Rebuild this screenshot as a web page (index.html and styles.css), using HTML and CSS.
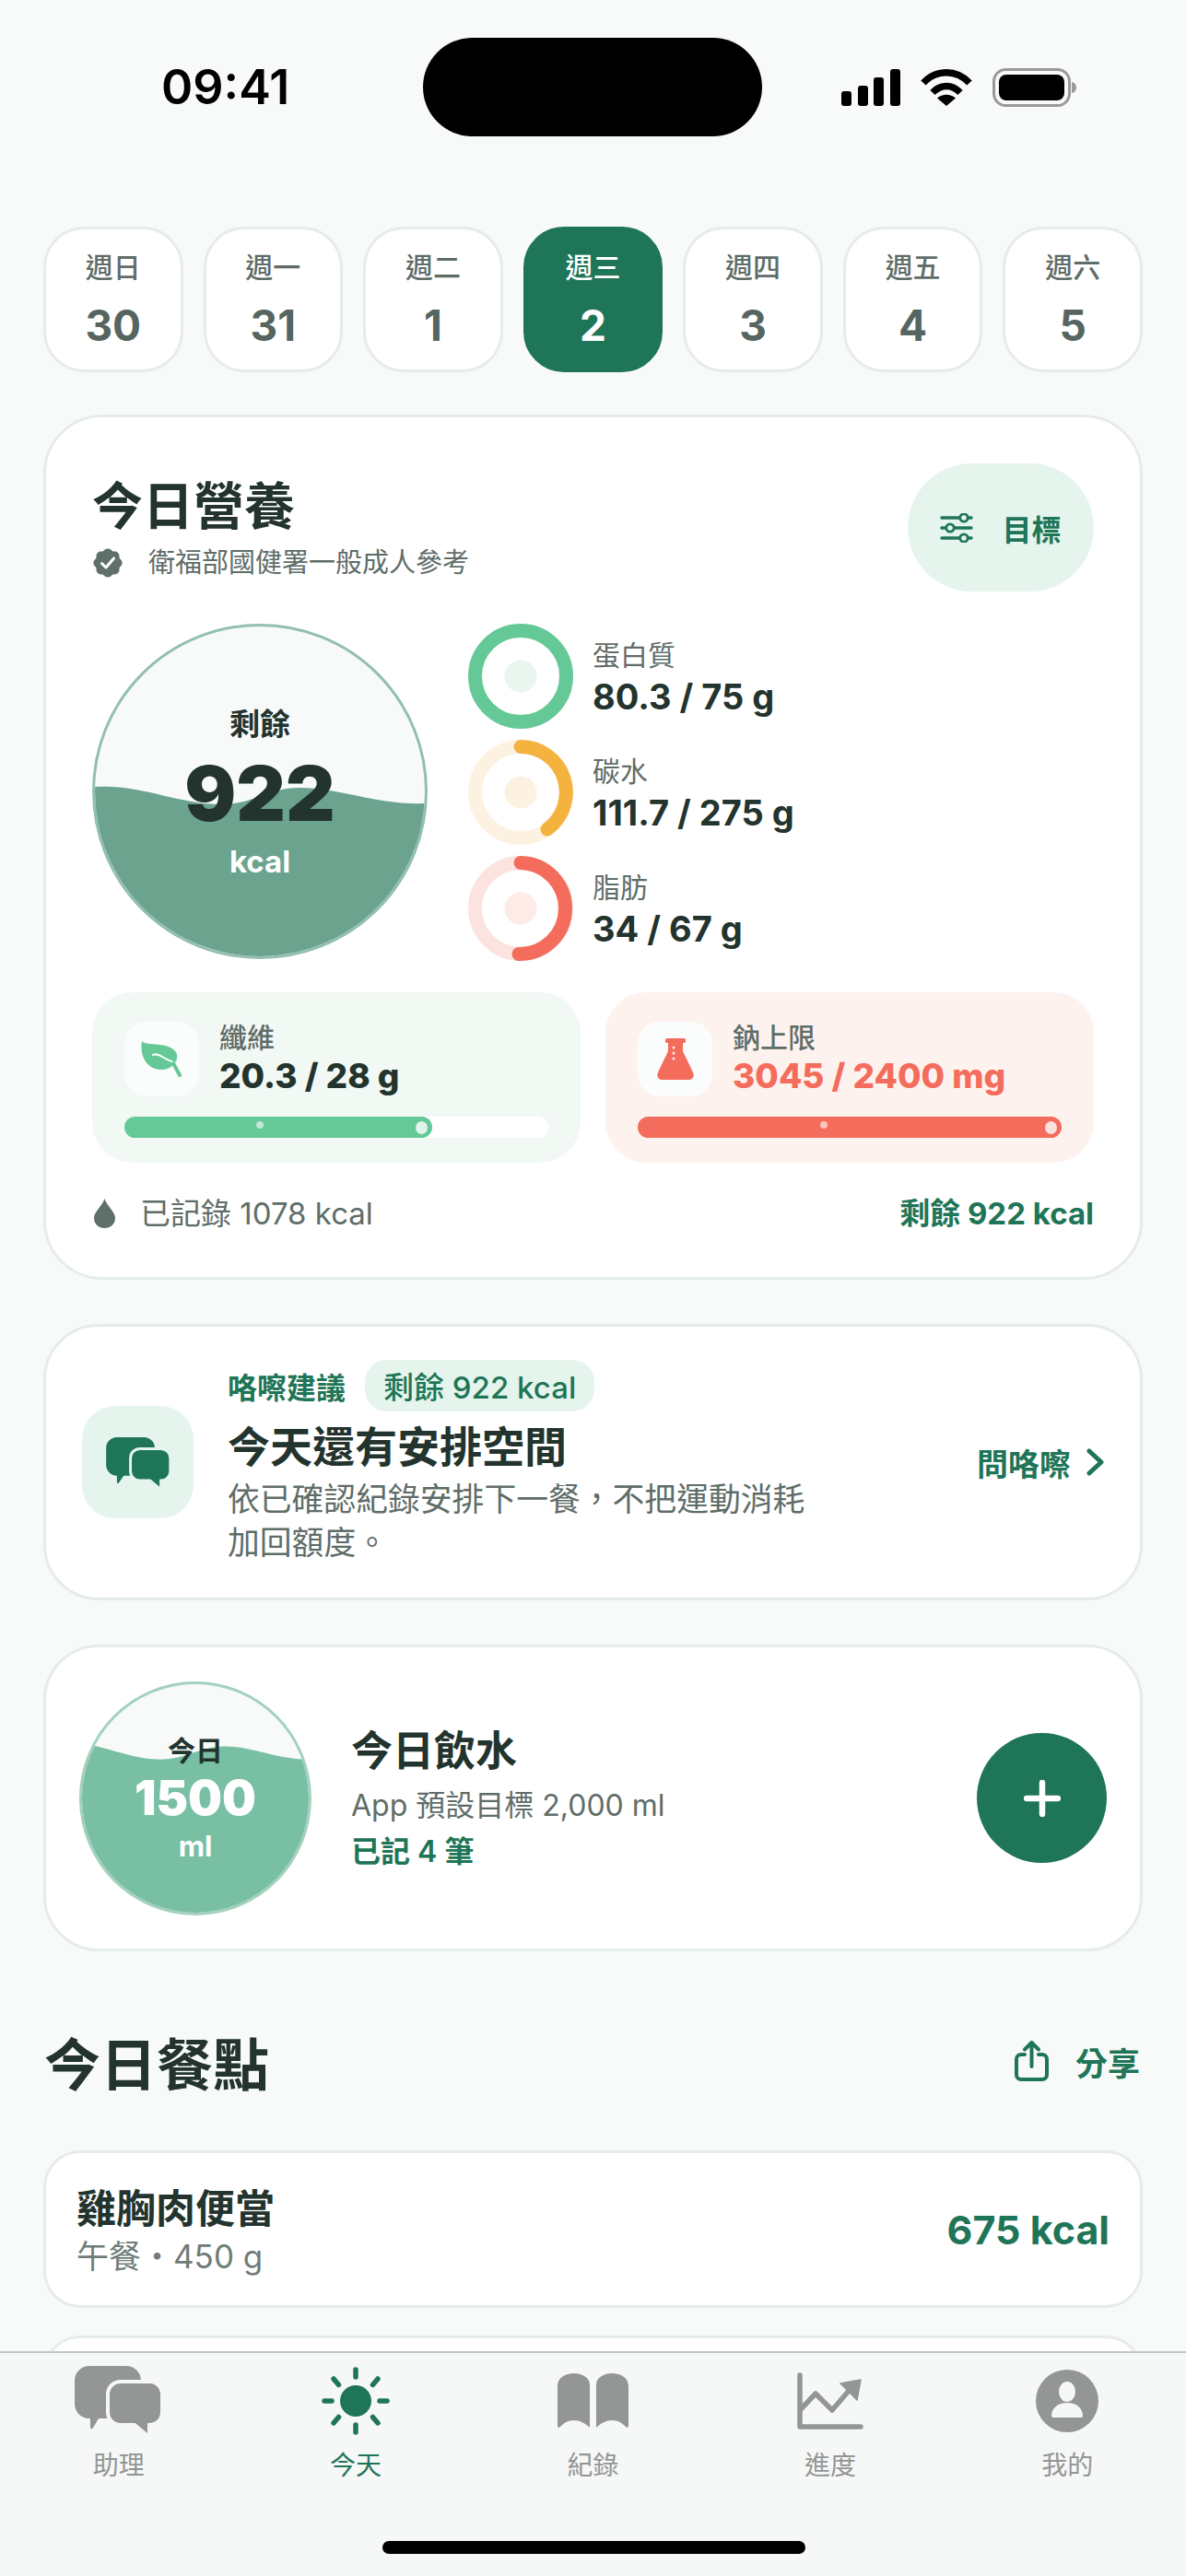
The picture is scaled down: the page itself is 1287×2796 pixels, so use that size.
FILE: index.html
```html
<!DOCTYPE html>
<html lang="zh-Hant">
	<head>
		<meta charset="utf-8" />
		<title>今日營養</title>
		<link rel="stylesheet" href="styles.css">
	</head>
	<body>
		<div class="phone">
			<!--狀態列-->
			<div class="status">
				<span class="time">09:41</span>
				<div class="island"></div>
				<div class="status-icons">
					<svg width="64" height="40" viewBox="0 0 64 40">
						<rect x="0" y="24" width="11" height="16" rx="3"/>
						<rect x="18" y="18" width="11" height="22" rx="3"/>
						<rect x="35" y="9" width="11" height="31" rx="3"/>
						<rect x="53" y="0" width="11" height="40" rx="3"/>
					</svg>
					<svg width="56" height="41" viewBox="0 0 56 41">
						<path d="M3 16C17 1 39 1 53 16" fill="none" stroke="#000" stroke-width="7.5"/>
						<path d="M13 26.5C22 17 34 17 43 26.5" fill="none" stroke="#000" stroke-width="7.5"/>
						<path d="M28 41L18 32.5C24 27.5 32 27.5 38 32.5Z"/>
					</svg>
					<svg width="91" height="42" viewBox="0 0 91 42">
						<rect x="1.5" y="1.5" width="82" height="39" rx="13" fill="none" stroke="#999" stroke-width="3"/>
						<rect x="7" y="7" width="71" height="28" rx="8"/>
						<path d="M86 15C89 15.500 91 18 91 21C91 24 89 26.500 86 27Z" fill="#999"/>
					</svg>
				</div>
			</div>

			<!--日期列-->
			<div class="days">
				<div class="day"><span class="day-name">週日</span><span class="day-num">30</span></div>
				<div class="day"><span class="day-name">週一</span><span class="day-num">31</span></div>
				<div class="day"><span class="day-name">週二</span><span class="day-num">1</span></div>
				<div class="day active"><span class="day-name">週三</span><span class="day-num">2</span></div>
				<div class="day"><span class="day-name">週四</span><span class="day-num">3</span></div>
				<div class="day"><span class="day-name">週五</span><span class="day-num">4</span></div>
				<div class="day"><span class="day-name">週六</span><span class="day-num">5</span></div>
			</div>

			<!--今日營養-->
			<div class="card nutrition">
				<div class="nutrition-head">
					<div class="head-text">
						<div class="big-title">今日營養</div>
						<div class="source">
							<svg width="34" height="34" viewBox="0 0 34 34">
								<g fill="#5f6f6a">
									<rect x="4.500" y="4.500" width="25" height="25" rx="5"/>
									<rect x="4.500" y="4.500" width="25" height="25" rx="5" transform="rotate(45 17 17)"/>
								</g>
								<path d="M10.500 17.500L15 22L23.500 12" fill="none" stroke="#fff" stroke-width="3" stroke-linecap="round" stroke-linejoin="round"/>
							</svg>
							<span>衛福部國健署一般成人參考</span>
						</div>
					</div>
					<div class="goal-btn">
						<svg width="36" height="32" viewBox="0 0 36 32" fill="none" stroke="#1f7557" stroke-width="3.500" stroke-linecap="round">
							<path d="M2 5H21M31 5H34M2 16H6M16 16H34M2 27H21M31 27H34"/>
							<circle cx="26" cy="5" r="4.200" stroke-width="2.800"/>
							<circle cx="11" cy="16" r="4.200" stroke-width="2.800"/>
							<circle cx="26" cy="27" r="4.200" stroke-width="2.800"/>
						</svg>
						<span>目標</span>
					</div>
				</div>

				<div class="nutrition-body">
					<div class="gauge">
						<svg class="wave" viewBox="0 0 358 358" preserveAspectRatio="none">
							<path d="M0 174C50 171 90 193 138 193C172 193 188 175 222 175C266 175 306 194 358 192V358H0Z" fill="#6ba38f"/>
						</svg>
						<span class="gauge-label">剩餘</span>
						<span class="gauge-num">922</span>
						<span class="gauge-unit">kcal</span>
					</div>
					<div class="macros">
						<div class="macro">
							<svg class="ring" viewBox="0 0 114 114">
								<circle cx="57" cy="57" r="49.500" fill="none" stroke="#65c997" stroke-width="15"/>
								<circle cx="57" cy="57" r="17.500" fill="#e8f6ef"/>
							</svg>
							<div>
								<div class="macro-name">蛋白質</div>
								<div class="macro-val">80.3 / 75 g</div>
							</div>
						</div>
						<div class="macro">
							<svg class="ring" viewBox="0 0 114 114">
								<circle cx="57" cy="57" r="49.500" fill="none" stroke="#fdf2e2" stroke-width="15"/>
								<path d="M57 7.500A49.500 49.500 0 0 1 86 97" fill="none" stroke="#f4b23e" stroke-width="15" stroke-linecap="round"/>
								<circle cx="57" cy="57" r="17.500" fill="#fdf2e2"/>
							</svg>
							<div>
								<div class="macro-name">碳水</div>
								<div class="macro-val">111.7 / 275 g</div>
							</div>
						</div>
						<div class="macro">
							<svg class="ring" viewBox="0 0 114 114">
								<circle cx="57" cy="57" r="49.500" fill="none" stroke="#fce3e0" stroke-width="15"/>
								<path d="M57 7.500A49.500 49.500 0 0 1 55 106.500" fill="none" stroke="#f46c5b" stroke-width="15" stroke-linecap="round"/>
								<circle cx="57" cy="57" r="17.500" fill="#fdebe8"/>
							</svg>
							<div>
								<div class="macro-name">脂肪</div>
								<div class="macro-val">34 / 67 g</div>
							</div>
						</div>
					</div>
				</div>

				<div class="limits">
					<div class="limit fiber">
						<div class="limit-top">
							<div class="limit-icon">
								<svg width="45" height="39" viewBox="0 0 45 39">
									<path d="M1 0C5 6 30 0 38 12C42 19 36 30 24 31C8 32 -2 18 1 0Z" fill="#65c997"/>
									<path d="M13 15C19 12 25 20 36 23" fill="none" stroke="#fbfdfc" stroke-width="2" stroke-linecap="round"/>
									<path d="M35 24L42 37" fill="none" stroke="#65c997" stroke-width="4" stroke-linecap="round"/>
								</svg>
							</div>
							<div>
								<div class="limit-name">纖維</div>
								<div class="limit-val">20.3 / 28 g</div>
							</div>
						</div>
						<div class="track">
							<div class="track-fill" style="width:72.500%">
								<i class="dot-small"></i>
								<i class="dot-end"></i>
							</div>
						</div>
					</div>
					<div class="limit sodium">
						<div class="limit-top">
							<div class="limit-icon">
								<svg width="40" height="45" viewBox="0 0 40 45">
									<rect x="9" y="0" width="22" height="5" rx="1.500" fill="#f46c5b"/>
									<path d="M12 4H28V14L39 37C41 42 38 45 34 45H6C2 45 -1 42 1 37L12 14Z" fill="#f46c5b"/>
									<g fill="#fef2ef">
										<circle cx="18" cy="10" r="1.500"/>
										<circle cx="18" cy="16" r="1.500"/>
										<circle cx="18" cy="22" r="1.500"/>
									</g>
								</svg>
							</div>
							<div>
								<div class="limit-name">鈉上限</div>
								<div class="limit-val over">3045 / 2400 mg</div>
							</div>
						</div>
						<div class="track">
							<div class="track-fill" style="width:100%">
								<i class="dot-small"></i>
								<i class="dot-end"></i>
							</div>
						</div>
					</div>
				</div>

				<div class="nutrition-foot">
					<div class="logged">
						<svg width="23" height="32" viewBox="0 0 23 32">
							<path d="M11.500 0C14 8 23 14 23 21C23 27.500 18 32 11.500 32C5 32 0 27.500 0 21C0 14 9 8 11.500 0Z" fill="#5f6f6a"/>
						</svg>
						<span>已記錄 1078 kcal</span>
					</div>
					<span class="left-kcal">剩餘 922 kcal</span>
				</div>
			</div>

			<!--咯嚓建議-->
			<div class="card coach">
				<div class="coach-icon">
					<svg width="70" height="55" viewBox="0 0 95 75">
						<path d="M16 0H56C65 0 72 7 72 16V41C72 50 65 57 56 57H26L19 67C18 69 16 68 16 66V57C7 57 0 50 0 41V16C0 7 7 0 16 0Z" fill="#1f7557"/>
						<path d="M50 17H81C89 17 95 23 95 31V50C95 58 89 64 81 64V73C81 75 79 76 77 74L65 64H50C42 64 36 58 36 50V31C36 23 42 17 50 17Z" fill="#1f7557" stroke="#e5f5ed" stroke-width="4"/>
					</svg>
				</div>
				<div class="coach-text">
					<div class="coach-top">
						<span class="coach-label">咯嚓建議</span>
						<span class="coach-pill">剩餘 922 kcal</span>
					</div>
					<div class="coach-title">今天還有安排空間</div>
					<div class="coach-desc">依已確認紀錄安排下一餐，不把運動消耗加回額度。</div>
				</div>
				<div class="coach-ask">
					<span>問咯嚓</span>
					<svg width="21" height="30" viewBox="0 0 21 30">
						<path d="M4 3L17 15L4 27" fill="none" stroke="#1f7557" stroke-width="5" stroke-linecap="round" stroke-linejoin="round"/>
					</svg>
				</div>
			</div>

			<!--今日飲水-->
			<div class="card water">
				<div class="water-gauge">
					<svg class="wave" viewBox="0 0 246 246" preserveAspectRatio="none">
						<path d="M0 64C30 68 55 81 85 81C113 81 128 67 155 67C186 67 210 81 246 81V246H0Z" fill="#79bfa3"/>
					</svg>
					<span class="water-label">今日</span>
					<span class="water-num">1500</span>
					<span class="water-unit">ml</span>
				</div>
				<div class="water-text">
					<div class="water-title">今日飲水</div>
					<div class="water-desc">App 預設目標 2,000 ml</div>
					<div class="water-count">已記 4 筆</div>
				</div>
				<div class="plus-btn">
					<svg width="40" height="40" viewBox="0 0 40 40">
						<path d="M20 3V37M3 20H37" stroke="#fff" stroke-width="6.500" stroke-linecap="round"/>
					</svg>
				</div>
			</div>

			<!--今日餐點-->
			<div class="section-head">
				<span class="section-title">今日餐點</span>
				<div class="share">
					<svg width="37" height="44" viewBox="0 0 37 44" fill="none" stroke="#1f7557" stroke-width="4" stroke-linecap="round" stroke-linejoin="round">
						<path d="M11 15H7A5 5 0 0 0 2 20V37A5 5 0 0 0 7 42H30A5 5 0 0 0 35 37V20A5 5 0 0 0 30 15H26"/>
						<path d="M18.500 28V3M11 9.500L18.500 2L26 9.500"/>
					</svg>
					<span>分享</span>
				</div>
			</div>
			<div class="meals">
				<div class="meal">
					<div>
						<div class="meal-name">雞胸肉便當</div>
						<div class="meal-sub">午餐・450 g</div>
					</div>
					<span class="meal-kcal">675 kcal</span>
				</div>
				<div class="meal"></div>
			</div>

			<!--底部分頁-->
			<div class="tabbar">
				<div class="tabs">
					<div class="tab">
						<div class="tab-icon">
							<svg width="95" height="75" viewBox="0 0 95 75">
								<path d="M16 0H56C65 0 72 7 72 16V41C72 50 65 57 56 57H26L20 67C19 69 17 69 17 66V57H16C7 57 0 50 0 41V16C0 7 7 0 16 0Z" fill="#949695"/>
								<path d="M50 17H81C89 17 95 23 95 31V50C95 58 89 64 81 64V73C81 75 79 76 77 74L65 64H50C42 64 36 58 36 50V31C36 23 42 17 50 17Z" fill="#949695" stroke="#f6f7f7" stroke-width="4"/>
							</svg>
						</div>
						<span>助理</span>
					</div>
					<div class="tab current">
						<div class="tab-icon">
							<svg width="74" height="74" viewBox="0 0 74 74">
								<circle cx="37" cy="37" r="17" fill="#1f7557"/>
								<g stroke="#1f7557" stroke-width="5.500" stroke-linecap="round">
									<path d="M37 3V11M37 63V71M3 37H11M63 37H71M13 13L18.500 19.500M55.500 54.500L61 61M61 13L55.500 19.500M18.500 54.500L13 61"/>
								</g>
							</svg>
						</div>
						<span>今天</span>
					</div>
					<div class="tab">
						<div class="tab-icon">
							<svg width="77" height="60" viewBox="0 0 77 60" fill="#949695">
								<path d="M0 14C0 5 8 0 18 0C28 0 35 6 35 12V59C30 54 24 51 18 51C11 51 7 54 3 58C1 60 0 59 0 56Z"/>
								<path d="M77 14C77 5 69 0 59 0C49 0 42 6 42 12V59C47 54 53 51 59 51C66 51 70 54 74 58C76 60 77 59 77 56Z"/>
							</svg>
						</div>
						<span>紀錄</span>
					</div>
					<div class="tab">
						<div class="tab-icon">
							<svg width="72" height="62" viewBox="0 0 72 62">
								<path d="M3 3V59H69" fill="none" stroke="#949695" stroke-width="5.500" stroke-linecap="round" stroke-linejoin="round"/>
								<path d="M3 41L20 23L38 41L56 20" fill="none" stroke="#949695" stroke-width="5.500" stroke-linejoin="round"/>
								<path d="M47 12L69 8L65 30Z" fill="#949695" stroke="#949695" stroke-width="1.500" stroke-linejoin="round"/>
							</svg>
						</div>
						<span>進度</span>
					</div>
					<div class="tab">
						<div class="tab-icon">
							<svg width="68" height="68" viewBox="0 0 68 68">
								<circle cx="34" cy="34" r="34" fill="#949695"/>
								<ellipse cx="34" cy="24" rx="9" ry="11" fill="#f6f7f7"/>
								<path d="M17 50C17 42 24 36 34 36C44 36 51 42 51 50C51 51.500 50 52 49 52H19C18 52 17 51.500 17 50Z" fill="#f6f7f7"/>
							</svg>
						</div>
						<span>我的</span>
					</div>
				</div>
				<div class="home-bar"></div>
			</div>
		</div>
	</body>
</html>
```

FILE: styles.css
```css
*{
	margin: 0;
	padding: 0;
	box-sizing: border-box;
}
body{
	background-color: #f7faf9;
	font-family: Inter, "Noto Sans CJK TC", sans-serif;
	color: #23332d;
}
.phone{
	width: 1287px;
	height: 2796px;
	position: relative;
	overflow: hidden;
	background-color: #f7faf9;
}
svg{
	display: block;
	flex: none;
}

/*狀態列*/
.status{
	display: grid;
	grid-template-columns: 459px 368px 1fr;
	align-items: center;
	height: 107px;
	margin-top: 41px;
}
.time{
	padding-left: 175px;
	font-size: 52px;
	font-weight: 600;
	color: #000;
}
.island{
	height: 107px;
	background-color: #000;
	border-radius: 54px;
}
.status-icons{
	display: flex;
	align-items: center;
	padding-left: 86px;
	gap: 22px;
}

/*日期列*/
.days{
	display: grid;
	grid-template-columns: repeat(7, 1fr);
	gap: 22px;
	padding: 0 47px;
	margin-top: 98px;
}
.day{
	height: 158px;
	display: flex;
	flex-direction: column;
	align-items: center;
	justify-content: center;
	gap: 15px;
	background-color: #fff;
	border: 3px solid #e6ecea;
	border-radius: 44px;
}
.day-name{
	font-size: 30px;
	line-height: 40px;
	font-weight: 500;
	color: #5f6d68;
}
.day-num{
	font-size: 46px;
	line-height: 56px;
	font-weight: 700;
	color: #56655f;
}
.day.active{
	background-color: #1f7557;
	border-color: #1f7557;
}
.day.active .day-name,
.day.active .day-num{
	color: #fff;
}

/*卡片*/
.card{
	background-color: #fff;
	border: 3px solid #e6ecea;
	margin: 0 47px;
}
.nutrition{
	margin-top: 46px;
	padding: 50px 50px 49px;
	border-radius: 64px;
}
.nutrition-head{
	display: flex;
	justify-content: space-between;
}
.head-text{
	padding-top: 11px;
}
.big-title{
	font-size: 55px;
	line-height: 70px;
	font-weight: 700;
}
.source{
	display: flex;
	align-items: center;
	gap: 27px;
	margin-top: 7px;
	font-size: 29px;
	line-height: 40px;
	color: #5f6d68;
}
.goal-btn{
	width: 202px;
	height: 139px;
	display: flex;
	align-items: center;
	justify-content: center;
	gap: 31px;
	background-color: #e5f5ed;
	border-radius: 70px;
	font-size: 32px;
	font-weight: 700;
	color: #1f7557;
}
.nutrition-body{
	display: flex;
	gap: 44px;
	margin-top: 35px;
}
.gauge,
.water-gauge{
	position: relative;
	overflow: hidden;
	flex: none;
	display: flex;
	flex-direction: column;
	align-items: center;
	justify-content: center;
	border-radius: 50%;
	background-color: #f7faf9;
}
.gauge{
	width: 364px;
	height: 364px;
	padding-top: 2px;
	border: 3px solid #92bfae;
}
.wave{
	position: absolute;
	left: 0;
	top: 0;
	width: 100%;
	height: 100%;
}
.gauge span,
.water-gauge span{
	position: relative;
}
.gauge-label{
	font-size: 33px;
	line-height: 40px;
	font-weight: 700;
}
.gauge-num{
	font-size: 83px;
	line-height: 110px;
	font-weight: 900;
}
.gauge-unit{
	font-size: 33px;
	line-height: 38px;
	font-weight: 700;
	color: #fff;
}
.macros{
	display: flex;
	flex-direction: column;
	gap: 12px;
}
.macro{
	display: flex;
	align-items: center;
	gap: 21px;
}
.ring{
	width: 114px;
	height: 114px;
}
.macro-name{
	font-size: 30px;
	line-height: 44px;
	color: #5f6d68;
}
.macro-val{
	font-size: 38px;
	line-height: 46px;
	font-weight: 700;
}

/*纖維 鈉*/
.limits{
	display: grid;
	grid-template-columns: 1fr 1fr;
	gap: 27px;
	margin-top: 34px;
}
.limit{
	height: 185px;
	padding: 30px 35px 0;
	border-radius: 44px;
}
.fiber{
	background-color: #f2f9f5;
}
.sodium{
	background-color: #fef2ef;
}
.limit-top{
	display: flex;
	align-items: center;
	gap: 22px;
}
.limit-icon{
	width: 81px;
	height: 81px;
	display: flex;
	align-items: center;
	justify-content: center;
	background-color: #fbfdfc;
	border-radius: 24px;
}
.limit-name{
	font-size: 30px;
	line-height: 38px;
	font-weight: 500;
	color: #5f6d68;
}
.limit-val{
	font-size: 37px;
	line-height: 46px;
	font-weight: 800;
}
.limit-val.over{
	color: #f46c5b;
}
.track{
	height: 23px;
	margin-top: 21px;
	background-color: #fff;
	border-radius: 12px;
}
.track-fill{
	position: relative;
	height: 100%;
	border-radius: 12px;
}
.fiber .track-fill{
	background-color: #65c997;
}
.sodium .track-fill{
	background-color: #f46c5b;
}
.dot-small{
	position: absolute;
	left: 43%;
	top: 5px;
	width: 8px;
	height: 8px;
	border-radius: 50%;
	background-color: rgba(255,255,255,.6);
}
.dot-end{
	position: absolute;
	right: 5px;
	top: 5px;
	width: 13px;
	height: 14px;
	border-radius: 50%;
	background-color: rgba(255,255,255,.8);
}
.nutrition-foot{
	display: flex;
	align-items: center;
	justify-content: space-between;
	margin-top: 35px;
	font-size: 33px;
	line-height: 40px;
}
.logged{
	display: flex;
	align-items: center;
	gap: 27px;
	padding-left: 2px;
	color: #5f6d68;
}
.left-kcal{
	font-weight: 700;
	color: #1f7557;
}

/*建議*/
.coach{
	height: 300px;
	margin-top: 48px;
	padding: 0 38px 0 39px;
	display: flex;
	align-items: center;
	border-radius: 60px;
}
.coach-icon{
	width: 121px;
	height: 122px;
	display: flex;
	align-items: center;
	justify-content: center;
	background-color: #e5f5ed;
	border-radius: 36px;
	flex: none;
}
.coach-text{
	margin-left: 37px;
	width: 640px;
}
.coach-top{
	display: flex;
	align-items: center;
	gap: 21px;
}
.coach-label{
	font-size: 32px;
	font-weight: 700;
	color: #1f7557;
}
.coach-pill{
	height: 56px;
	padding: 0 20px;
	display: flex;
	align-items: center;
	background-color: #e5f5ed;
	border-radius: 24px;
	font-size: 33px;
	font-weight: 500;
	color: #1f7557;
}
.coach-title{
	margin-top: 8px;
	font-size: 46px;
	line-height: 60px;
	font-weight: 700;
}
.coach-desc{
	margin-top: 4px;
	font-size: 34.800px;
	line-height: 47px;
	color: #5f6d68;
}
.coach-ask{
	margin-left: auto;
	display: flex;
	align-items: center;
	gap: 16px;
	font-size: 34px;
	font-weight: 700;
	color: #1f7557;
}

/*飲水*/
.water{
	height: 333px;
	margin-top: 48px;
	padding: 0 36px;
	display: flex;
	align-items: center;
	border-radius: 60px;
}
.water-gauge{
	width: 252px;
	height: 254px;
	border: 3px solid #a2d1bd;
}
.water-label{
	font-size: 30px;
	line-height: 40px;
	font-weight: 700;
}
.water-num{
	font-size: 52px;
	line-height: 64px;
	font-weight: 900;
	color: #fff;
}
.water-unit{
	font-size: 31px;
	line-height: 40px;
	font-weight: 700;
	color: #fff;
}
.water-text{
	margin-left: 43px;
}
.water-title{
	font-size: 45px;
	line-height: 60px;
	font-weight: 700;
}
.water-desc{
	margin-top: 7px;
	font-size: 32px;
	line-height: 44px;
	color: #5f6d68;
}
.water-count{
	margin-top: 6px;
	font-size: 32px;
	line-height: 44px;
	font-weight: 600;
	color: #1f7557;
}
.plus-btn{
	margin-left: auto;
	width: 141px;
	height: 141px;
	display: flex;
	align-items: center;
	justify-content: center;
	background-color: #1f7557;
	border-radius: 50%;
}

/*餐點*/
.section-head{
	display: flex;
	align-items: center;
	justify-content: space-between;
	margin-top: 79px;
	padding: 0 50px 0 48px;
	height: 80px;
}
.section-title{
	font-size: 61px;
	font-weight: 700;
}
.share{
	display: flex;
	align-items: center;
	gap: 29px;
	font-size: 35px;
	font-weight: 700;
	color: #1f7557;
}
.meals{
	display: flex;
	flex-direction: column;
	gap: 30px;
	margin: 57px 47px 0;
}
.meal{
	height: 171px;
	flex: none;
	padding: 0 33px;
	display: flex;
	align-items: center;
	justify-content: space-between;
	background-color: #fff;
	border: 3px solid #e6ecea;
	border-radius: 40px;
}
.meal-name{
	font-size: 43px;
	line-height: 56px;
	font-weight: 600;
}
.meal-sub{
	margin-top: 2px;
	font-size: 35px;
	line-height: 44px;
	color: #6f7c77;
}
.meal-kcal{
	font-size: 43px;
	font-weight: 700;
	color: #1f7557;
}

/*底部分頁*/
.tabbar{
	position: absolute;
	left: 0;
	right: 0;
	top: 2552px;
	bottom: 0;
	background-color: #f6f7f7;
	border-top: 2px solid #c4c6c6;
}
.tabs{
	display: grid;
	grid-template-columns: repeat(5, 1fr);
}
.tab{
	display: flex;
	flex-direction: column;
	align-items: center;
	font-size: 28px;
	line-height: 38px;
	color: #939595;
}
.tab-icon{
	height: 103px;
	display: flex;
	align-items: center;
	justify-content: center;
}
.tab.current{
	color: #1f7557;
}
.home-bar{
	position: absolute;
	left: 415px;
	top: 204px;
	width: 459px;
	height: 14px;
	background-color: #000;
	border-radius: 7px;
}
```
